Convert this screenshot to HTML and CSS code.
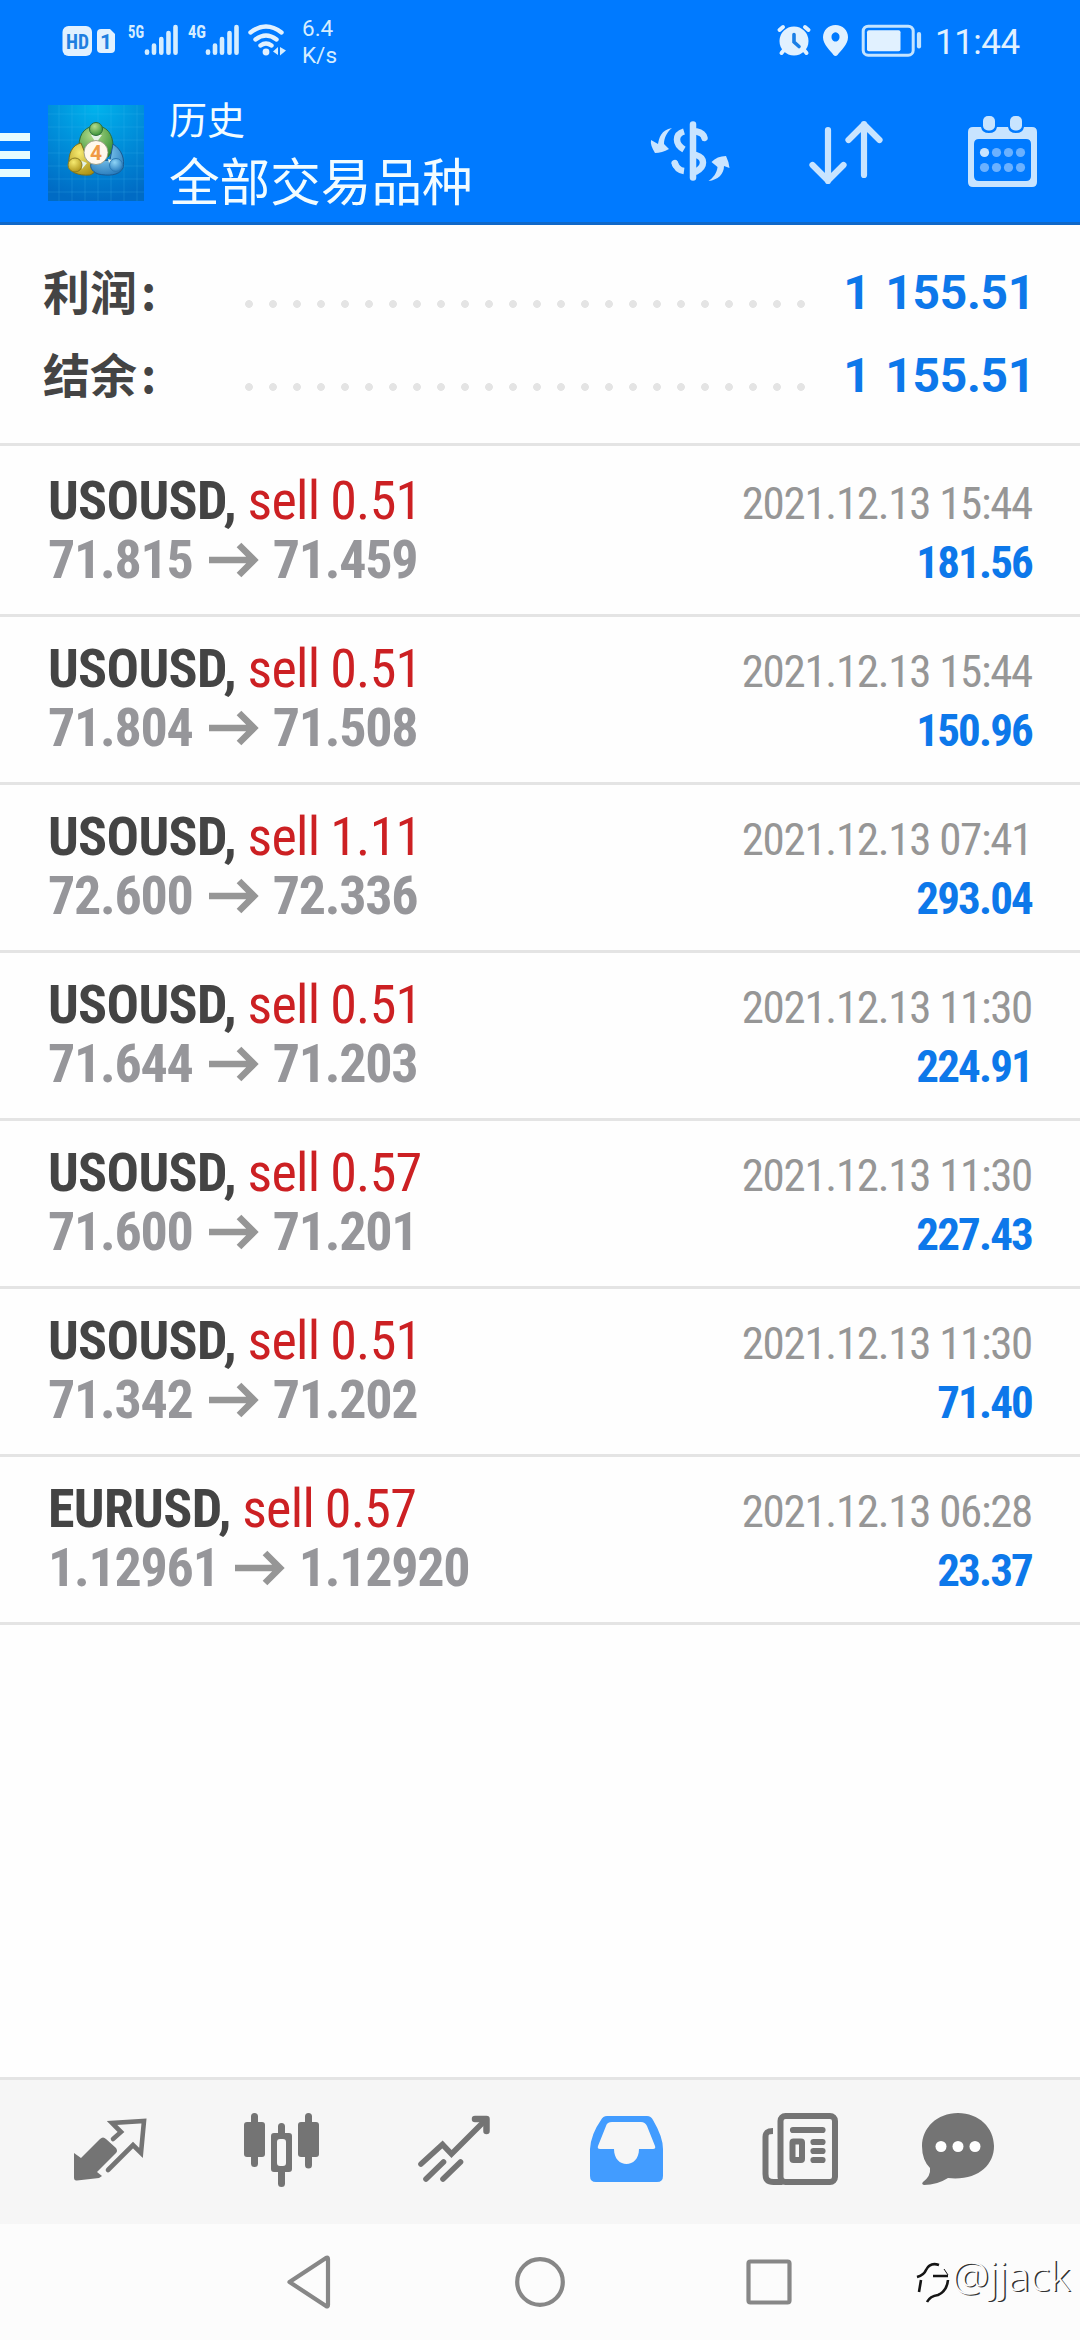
FILE: index.html
```html
<!DOCTYPE html>
<html lang="zh-CN">
<head>
<meta charset="utf-8">
<title>历史</title>
<link rel="stylesheet" href="styles.css">
</head>
<body>
<div class="screen">
  <header class="header">
    <div class="status">
      <svg class="status-left" width="300" height="80" viewBox="0 0 300 80">
        <rect x="62.5" y="26" width="29.5" height="30" rx="6" fill="#e1f1ff"/>
        <text x="66" y="49" class="hd" textLength="23" lengthAdjust="spacingAndGlyphs">HD</text>
        <path d="M101 29h9l5 5v15q0 4-4 4h-10q-4 0-4-4v-16q0-4 4-4z" fill="#e1f1ff"/>
        <text x="100" y="48.500" class="sim">1</text>
        <text x="128" y="38" class="net" textLength="16" lengthAdjust="spacingAndGlyphs">5G</text>
        <text x="188" y="38" class="net" textLength="18" lengthAdjust="spacingAndGlyphs">4G</text>
        <g stroke="#d5edff" stroke-width="4.6" stroke-linecap="round">
          <path d="M147 51.5v1.3M154 45.5v7.3M161.300 39v13.800M168.500 33v19.800M175.500 27v25.800"/>
          <path d="M208 51.500v1.300M215 45.500v7.300M222 39v13.800M229.500 33v19.800M236.500 27v25.800"/>
        </g>
        <g fill="none" stroke="#e1f1ff" stroke-width="4.400" stroke-linecap="round">
          <path d="M250.500 32.500q15.500-12 31 0M255.500 39.500q10.500-8 21 0M260.500 45.500q5.500-4 11 0"/>
        </g>
        <circle cx="266" cy="52" r="3.400" fill="#e1f1ff"/>
        <path d="M273 51.500l5-4.500v8zM280 47v8.500l6-5z" fill="#d5edff"/>
      </svg>
      <div class="speed"><span>6.4</span><span>K/s</span></div>
      <svg class="status-right" width="160" height="80" viewBox="770 0 160 80">
        <g stroke="#e1f1ff" stroke-width="4" stroke-linecap="round">
          <path d="M779.500 30l3.500-3M808.500 30l-3.500-3M784 50l-2.500 3M804 50l2.500 3"/>
        </g>
        <circle cx="794" cy="41" r="14.500" fill="#e1f1ff"/>
        <path d="M794 34.500v7.500l5 4.500" fill="none" stroke="#1b7fe6" stroke-width="3.600" stroke-linecap="round"/>
        <path fill-rule="evenodd" fill="#e1f1ff" d="M835.500 25c7 0 12.500 5.300 12.500 12.200 0 7.500-7.500 13.300-10.500 17.800q-2 2-4 0c-3-4.500-10.500-10.300-10.500-17.800 0-6.900 5.500-12.200 12.500-12.200zM835.500 32.300a4 4.600 0 1 0 .01 0z"/>
        <rect x="863.200" y="26.200" width="50" height="29" rx="5" fill="none" stroke="#c4e4ff" stroke-width="3"/>
        <rect x="867" y="30.300" width="33.500" height="21" rx="2" fill="#e1f1ff"/>
        <path d="M919 34v12.500" stroke="#c4e4ff" stroke-width="4.200" stroke-linecap="round"/>
      </svg>
      <time class="clock">11:44</time>
    </div>
    <div class="toolbar">
      <div class="menu"><i></i><i></i><i></i></div>
      <svg class="logo" width="96" height="96" viewBox="0 0 96 96">
        <defs>
          <radialGradient id="bg" cx=".5" cy="0" r="1"><stop offset="0" stop-color="#00b4ee"/><stop offset=".55" stop-color="#008bd8"/><stop offset="1" stop-color="#006bc4"/></radialGradient>
          <radialGradient id="gr" cx=".4" cy=".3" r=".8"><stop offset="0" stop-color="#b4dc8c"/><stop offset="1" stop-color="#2c8a2f"/></radialGradient>
          <radialGradient id="ye" cx=".4" cy=".3" r=".8"><stop offset="0" stop-color="#f6ea70"/><stop offset="1" stop-color="#a88c10"/></radialGradient>
          <radialGradient id="bl" cx=".4" cy=".3" r=".8"><stop offset="0" stop-color="#8ed4f6"/><stop offset="1" stop-color="#1f74b8"/></radialGradient>
        </defs>
        <rect width="96" height="96" fill="url(#bg)"/>
        <path d="M11 0v96M24 0v96M37 0v96M50 0v96M63 0v96M76 0v96M89 0v96M0 9h96M0 22h96M0 35h96M0 48h96M0 61h96M0 74h96M0 87h96" stroke="#4cc0f0" stroke-opacity=".2"/>
        <path d="M31 41c0-14 8-20 17-20s18 6 17 24l-5 7-28-4z" fill="url(#gr)" stroke="#2c6d3c"/>
        <path d="M33 38c-9 2-13 11-12 22 0 7 9 11 21 10 5-2 7-5 4-10l-9-12z" fill="url(#ye)" stroke="#77701f"/>
        <path d="M65 39c9 6 12 15 10 24-4 8-15 8-25 6-7-3-9-8-6-12l18-2z" fill="url(#bl)" stroke="#1b5a92"/>
        <path d="M43 30l5 8 6-8zM29 54l10 4-5 6zM60 54l8 2-6 6z" fill="#e5f3e8"/>
        <circle cx="48" cy="24" r="6.500" fill="url(#gr)" stroke="#2c6d3c"/>
        <circle cx="27" cy="60" r="7" fill="url(#ye)" stroke="#8b7c20"/>
        <circle cx="68" cy="60" r="6.500" fill="url(#bl)" stroke="#2a79b5"/>
        <circle cx="48" cy="47.500" r="12" fill="#fff8ec" stroke="#8a8f78" stroke-width=".8"/>
        <text x="48" y="55" class="four" text-anchor="middle">4</text>
      </svg>
      <div class="titles"><div class="title">历史</div><h1 class="subtitle">全部交易品种</h1></div>
      <svg class="actions" width="420" height="144" viewBox="640 80 420 144">
        <g fill="#cbe5ff">
          <path d="M672 128C661 130 659 138 658 144L651 140Q650 145 655 153Q662 153 669 149L664 144C664 138 667 132 672 128z"/>
          <path d="M708.500 181C713 178 717 173 717.500 167L711.500 162Q717 156 726 156Q729 162 729.500 168L724 166C724 174 718 180 708.500 181z"/>
        </g>
        <g fill="none" stroke="#c8e4ff" stroke-linecap="round">
          <path d="M693 124.500v53" stroke-width="6.500"/>
          <path d="M684 131.500q-7 2-7 8t7 10M674.500 162q2 8 9.500 9" stroke-width="6.500" stroke-linecap="butt"/>
          <path d="M674.800 163.200l.5 1.500" stroke-width="6.500"/>
          <path d="M696.500 131.500q7 1.500 8 6.500M696 155q7 2 7 7.500t-7 9" stroke-width="6.500"/>
          <path d="M828 130v51M812.500 165l15.500 15.500 15.500-15.500M864 175v-51M848.500 140l15.500-15.500 15.500 15.500" stroke-width="6.200" stroke-linejoin="round"/>
        </g>
        <path fill-rule="evenodd" fill="#c8e4ff" d="M973 127h8q1 6 8 6t8-6h11q1 6 8 6t8-6h8q5 0 5 5v50q0 5-5 5h-59q-5 0-5-5v-50q0-5 5-5zM979 139q-5 0-5 5v32q0 5 5 5h47q5 0 5-5v-32q0-5-5-5z"/>
        <rect x="983" y="116" width="12" height="14.500" rx="5" fill="#c8e4ff"/><rect x="1010" y="116" width="12" height="14.500" rx="5" fill="#c8e4ff"/>
        <circle cx="984.500" cy="152.500" r="4.600" fill="#c8e4ff"/>
        <g fill="#6bb1ff"><circle cx="996.500" cy="152.500" r="4.600"/><circle cx="1008.500" cy="152.500" r="4.600"/><circle cx="1020.500" cy="152.500" r="4.600"/><circle cx="984.500" cy="167.500" r="4.600"/><circle cx="996.500" cy="167.500" r="4.600"/><circle cx="1008.500" cy="167.500" r="4.600"/><circle cx="1020.500" cy="167.500" r="4.600"/></g>
      </svg>
    </div>
  </header>

  <section class="summary">
    <div class="sum-row"><span class="sum-label">利润<span class="colon">:</span></span><i class="dots"></i><b class="sum-value">1 155.51</b></div>
    <div class="sum-row"><span class="sum-label">结余<span class="colon">:</span></span><i class="dots"></i><b class="sum-value">1 155.51</b></div>
  </section>

  <main class="deals">
    <article class="deal"><div class="left"><div class="name"><b>USOUSD,</b> <span>sell 0.51</span></div><div class="price">71.815<svg class="arrow" viewBox="0 0 50 36"><path d="M0 18h45M30 3l15 15-15 15"/></svg>71.459</div></div><div class="right"><time>2021.12.13 15:44</time><b>181.56</b></div></article>
    <article class="deal"><div class="left"><div class="name"><b>USOUSD,</b> <span>sell 0.51</span></div><div class="price">71.804<svg class="arrow" viewBox="0 0 50 36"><path d="M0 18h45M30 3l15 15-15 15"/></svg>71.508</div></div><div class="right"><time>2021.12.13 15:44</time><b>150.96</b></div></article>
    <article class="deal"><div class="left"><div class="name"><b>USOUSD,</b> <span>sell 1.11</span></div><div class="price">72.600<svg class="arrow" viewBox="0 0 50 36"><path d="M0 18h45M30 3l15 15-15 15"/></svg>72.336</div></div><div class="right"><time>2021.12.13 07:41</time><b>293.04</b></div></article>
    <article class="deal"><div class="left"><div class="name"><b>USOUSD,</b> <span>sell 0.51</span></div><div class="price">71.644<svg class="arrow" viewBox="0 0 50 36"><path d="M0 18h45M30 3l15 15-15 15"/></svg>71.203</div></div><div class="right"><time>2021.12.13 11:30</time><b>224.91</b></div></article>
    <article class="deal"><div class="left"><div class="name"><b>USOUSD,</b> <span>sell 0.57</span></div><div class="price">71.600<svg class="arrow" viewBox="0 0 50 36"><path d="M0 18h45M30 3l15 15-15 15"/></svg>71.201</div></div><div class="right"><time>2021.12.13 11:30</time><b>227.43</b></div></article>
    <article class="deal"><div class="left"><div class="name"><b>USOUSD,</b> <span>sell 0.51</span></div><div class="price">71.342<svg class="arrow" viewBox="0 0 50 36"><path d="M0 18h45M30 3l15 15-15 15"/></svg>71.202</div></div><div class="right"><time>2021.12.13 11:30</time><b>71.40</b></div></article>
    <article class="deal"><div class="left"><div class="name"><b>EURUSD,</b> <span>sell 0.57</span></div><div class="price">1.12961<svg class="arrow" viewBox="0 0 50 36"><path d="M0 18h45M30 3l15 15-15 15"/></svg>1.12920</div></div><div class="right"><time>2021.12.13 06:28</time><b>23.37</b></div></article>
  </main>

  <nav class="tabs">
    <svg viewBox="24 2080 172 144"><path d="M74 2153l7 5 19-19q3-3 6 0l10 9q2 3 0 5l-19 19 5 4-3 2-22 2.500q-3 .5-3-3z" fill="#747474"/><path d="M113 2139l8-7-9-9 32-2-3 32-8-8-25 25" fill="none" stroke="#747474" stroke-width="4.600" stroke-linecap="round"/></svg>
    <svg viewBox="196 2080 172 144"><g fill="#747474"><rect x="244" y="2122" width="21" height="35" rx="3"/><rect x="298" y="2122" width="21" height="35" rx="3"/><path fill-rule="evenodd" d="M274 2133h15q3 0 3 3v33q0 3-3 3h-15q-3 0-3-3v-33q0-3 3-3zM280 2139q-3 0-3 3v21q0 3 3 3h3q3 0 3-3v-21q0-3-3-3z"/></g><path d="M254.500 2116.500v47M308.500 2116.500v48.500M281.500 2126.500v8M281.500 2170v13.500" stroke="#747474" stroke-width="7" stroke-linecap="round"/></svg>
    <svg viewBox="368 2080 172 144"><g fill="none" stroke="#747474" stroke-width="5.600" stroke-linecap="round"><path d="M421 2164l21.500-19.500 9 9.500 33-33"/><path d="M475 2119h11.500v12" stroke-width="6.500" stroke-linejoin="round"/><path d="M426 2179l17.500-17M443 2179l17.500-17"/></g></svg>
    <svg viewBox="540 2080 172 144"><path fill-rule="evenodd" fill="#429cff" d="M607 2116h40q4 0 6 4 10 17 10 29v27q0 6-6 6h-61q-6 0-6-6v-27q1-15 11-29 2-4 6-4zM612 2122q-5 0-6 4l-8 20q-1 3 2 3h14c0 20 25 20 25 0h14q3 0 2-3l-8-20q-2-4-6-4z"/></svg>
    <svg viewBox="712 2080 172 144"><g fill="none" stroke="#747474"><rect x="780.500" y="2116" width="54.500" height="66" rx="5" stroke-width="6"/><path d="M773 2131c-5 0-7.500 1-7.500 6v37c0 6 3 8 8 8h9" stroke-width="6"/><g stroke-width="6.200" stroke-linecap="round"><path d="M793 2130h29.500M813.500 2142h9M813.500 2151h9M813.500 2160h9"/></g><rect x="792.500" y="2141.500" width="9.500" height="18.500" rx="1" stroke-width="6"/></g></svg>
    <svg viewBox="884 2080 172 144"><path d="M958 2113c21 0 36 15 36 33 0 20-17 35-46 32q-11 7-24 7-3-1-1-3 8-6 7-14-8-8-8-22c0-18 15-33 36-33z" fill="#747474"/><g fill="#fff"><circle cx="941" cy="2146.500" r="5.500"/><circle cx="958" cy="2146.500" r="5.500"/><circle cx="975" cy="2146.500" r="5.500"/></g></svg>
  </nav>
  <footer class="system">
    <svg width="1080" height="116" viewBox="0 2224 1080 116">
      <g fill="none" stroke="#878787" stroke-width="4.200" stroke-linejoin="round"><path d="M289.500 2282l36.500-24q2-1 2 1v46q0 2-2 1z"/><circle cx="540" cy="2282" r="22.800"/><rect x="748.500" y="2261.500" width="41" height="41" rx="2"/></g>
      <g fill="none" stroke="#151515"><path d="M939 2265q-9-3-13 5-2 5-9 7M933 2276h15M921 2280l-2 12M948 2280q-1 11-10 15-8 1-11 7" stroke-width="2.600"/><path d="M944 2269l4 6" stroke-width="1"/></g>
      <text x="952" y="2291" class="mark" textLength="118" lengthAdjust="spacingAndGlyphs">@jjack</text>
    </svg>
  </footer>
</div>
</body>
</html>
```
FILE: styles.css
```css
* { box-sizing: border-box; }
body { margin: 0; background: #fefefe; font-family: Roboto, "Noto Sans CJK SC", sans-serif; }
svg { display: block; flex: none; }
.screen { width: 1080px; height: 2340px; display: flex; flex-direction: column; }

.header { height: 225px; background: #007aff; border-bottom: 3px solid #1068c8; flex: none; }
.status { height: 80px; display: flex; }
.hd { font: 700 21px "Roboto Condensed", Roboto, sans-serif; fill: #207fe0; }
.sim { font: 700 21px Roboto, sans-serif; fill: #207fe0; }
.net { font: 700 18px "Roboto Condensed", Roboto, sans-serif; fill: #d5edff; }
.speed { width: 470px; display: flex; flex-direction: column; font-size: 22.500px; line-height: 27px; color: #d5edff; padding: 15px 0 0 2px; }
.clock { margin-left: 5px; font-size: 35px; line-height: 80px; color: #e1f1ff; padding-top: 3px; letter-spacing: -.5px; }
.toolbar { height: 142px; display: flex; align-items: flex-start; }
.menu { width: 30px; padding-top: 53px; display: flex; flex-direction: column; gap: 10px; }
.menu i { height: 8px; background: #e6fcff; }
.logo { margin: 25px 0 0 18px; }
.four { font: 700 21px Roboto, sans-serif; fill: #f09a45; }
.titles { width: 496px; padding: 10px 0 0 25px; color: #f2fcff; }
.title { font-size: 38px; line-height: 56px; font-family: "Noto Sans CJK SC", sans-serif; }
.subtitle { margin: 0; font: 400 50.600px/66px "Noto Sans CJK SC", sans-serif; }

.summary { height: 221px; padding: 25px 45px 0 43px; border-bottom: 3px solid #e4e4e4; flex: none; }
.sum-row { height: 83px; display: flex; align-items: center; }
.sum-label { width: 194px; height: 83px; font: 700 47px/79px "Noto Sans CJK SC", sans-serif; color: #444; }
.colon { margin-left: 4px; }
.dots { width: 576px; height: 8px; margin-top: 25px; background: radial-gradient(circle, #e4e4e4 3.500px, transparent 4.300px) 0 0 / 24px 8px; }
.sum-value { margin-left: auto; padding-top: 2px; font-size: 48px; font-weight: 700; color: #0d78ea; word-spacing: 3px; letter-spacing: -.3px; }

.deals { flex: 1; padding-top: 3px; font-family: "Roboto Condensed", Roboto, sans-serif; }
.deal { height: 168px; padding: 22px 48px 0; display: flex; justify-content: space-between; border-bottom: 3px solid #e4e4e4; }
.name, .price { font-size: 54px; line-height: 59px; height: 59px; white-space: nowrap; }
.name b { color: #444; letter-spacing: -.7px; }
.name { word-spacing: -1px; }
.name span { color: #cc2023; letter-spacing: -.7px; }
.price { display: flex; align-items: center; font-weight: 700; color: #96969a; letter-spacing: -1.250px; }
.arrow { width: 50px; height: 36px; margin: 0 14px 0 16px; fill: none; stroke: #969696; stroke-width: 6.600; }
.right { display: flex; flex-direction: column; align-items: flex-end; font-size: 45px; line-height: 59px; padding-top: 3px; }
.right time { color: #969696; letter-spacing: -1.300px; }
.right b { color: #0d78ea; letter-spacing: -1.850px; }

.tabs { height: 147px; padding-left: 24px; background: #f6f6f6; border-top: 3px solid #e4e4e4; display: grid; grid-template-columns: repeat(6, 172px); flex: none; }
.tabs svg { width: 172px; height: 144px; }
.system { height: 116px; background: #fcfcfc; flex: none; }
.mark { font: 300 40px "Open Sans", "Noto Sans", sans-serif; fill: #fcfcfc; text-shadow: 1.500px 1px 0 #333; }
```
